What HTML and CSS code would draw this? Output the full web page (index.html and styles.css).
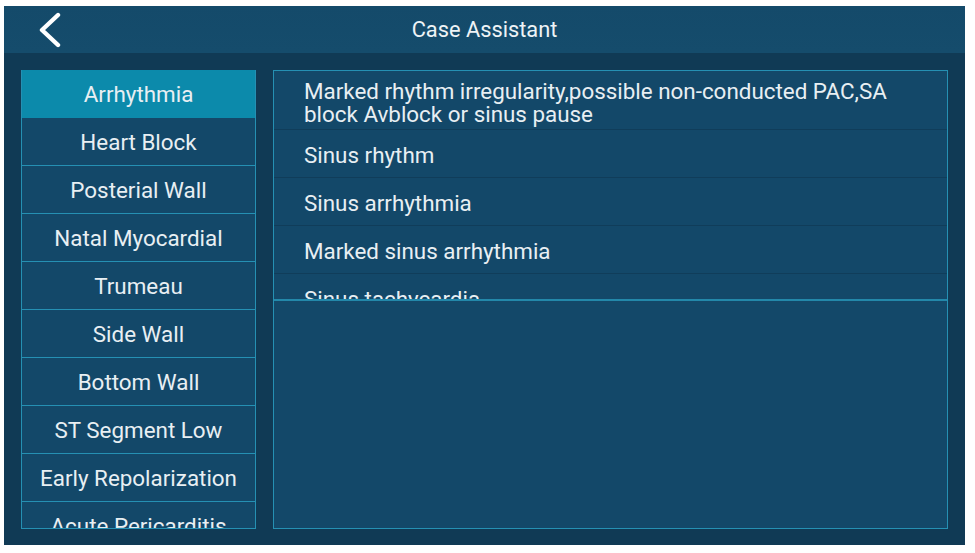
FILE: index.html
```html
<!DOCTYPE html>
<html>
<head>
<meta charset="utf-8">
<link rel="stylesheet" href="styles.css">
</head>
<body>
<div class="app">
  <header class="topbar">
    <div class="back">
      <svg width="26" height="36" viewBox="0 0 26 36"><path d="M21 3 L5 18 L21 33" fill="none" stroke="#ffffff" stroke-width="4.4" stroke-linecap="round" stroke-linejoin="round"/></svg>
    </div>
    <div class="title">Case Assistant</div>
    <div></div>
  </header>
  <main class="content">
    <nav class="cats">
      <div class="cat active">Arrhythmia</div>
      <div class="cat">Heart Block</div>
      <div class="cat">Posterial Wall</div>
      <div class="cat">Natal Myocardial</div>
      <div class="cat">Trumeau</div>
      <div class="cat">Side Wall</div>
      <div class="cat">Bottom Wall</div>
      <div class="cat">ST Segment Low</div>
      <div class="cat">Early Repolarization</div>
      <div class="cat">Acute Pericarditis</div>
    </nav>
    <section class="detail">
      <div class="items">
        <div class="item first">Marked rhythm irregularity,possible non-conducted PAC,SA block Avblock or sinus pause</div>
        <div class="item">Sinus rhythm</div>
        <div class="item">Sinus arrhythmia</div>
        <div class="item">Marked sinus arrhythmia</div>
        <div class="item">Sinus tachycardia</div>
      </div>
    </section>
  </main>
</div>
</body>
</html>
```
FILE: styles.css
```css
html, body {
  margin: 0;
  padding: 0;
  background: #ffffff;
}
body {
  padding: 6px 10px 8px 4px;
  font-family: Roboto, "Liberation Sans", sans-serif;
  color: #e8eff3;
}
.app {
  width: 961px;
  height: 539px;
  display: flex;
  flex-direction: column;
  background: #103a55;
}
.topbar {
  height: 47px;
  flex: none;
  display: grid;
  grid-template-columns: 1fr auto 1fr;
  align-items: center;
  background: linear-gradient(#144a6a, #154c6c);
}
.back {
  padding-left: 33px;
  display: flex;
  align-items: center;
  height: 36px;
}
.back svg { display: block; }
.title {
  font-size: 21.8px;
  color: #eef3f6;
}
.content {
  flex: 1;
  display: flex;
  gap: 17px;
  padding: 17px 17px 16px 17px;
  min-height: 0;
}
.cats {
  width: 233px;
  border: 1px solid #2590b3;
  border-top: none;
  background: #134869;
  overflow: hidden;
  flex: none;
}
.cat {
  height: 47px;
  flex: none;
  border-bottom: 1px solid #2590b3;
  display: flex;
  align-items: center;
  justify-content: center;
  font-size: 22.4px;
  color: #e8eff3;
  white-space: nowrap;
}
.cat.active {
  background: #0c8aab;
  border-bottom-color: #0c8aab;
  margin: 0 -1px;
}
.detail {
  flex: 1;
  border: 1px solid #2590b3;
  background: #134869;
  display: flex;
  flex-direction: column;
}
.items {
  height: 228px;
  overflow: hidden;
  border-bottom: 2px solid #2388aa;
  flex: none;
}
.item {
  box-sizing: border-box;
  height: 48px;
  border-bottom: 1px solid #103d5a;
  display: flex;
  align-items: center;
  padding: 4px 50px 0 30px;
  font-size: 22.4px;
  line-height: 23px;
}
.item.first {
  height: 59px;
  padding-top: 6px;
}
```
